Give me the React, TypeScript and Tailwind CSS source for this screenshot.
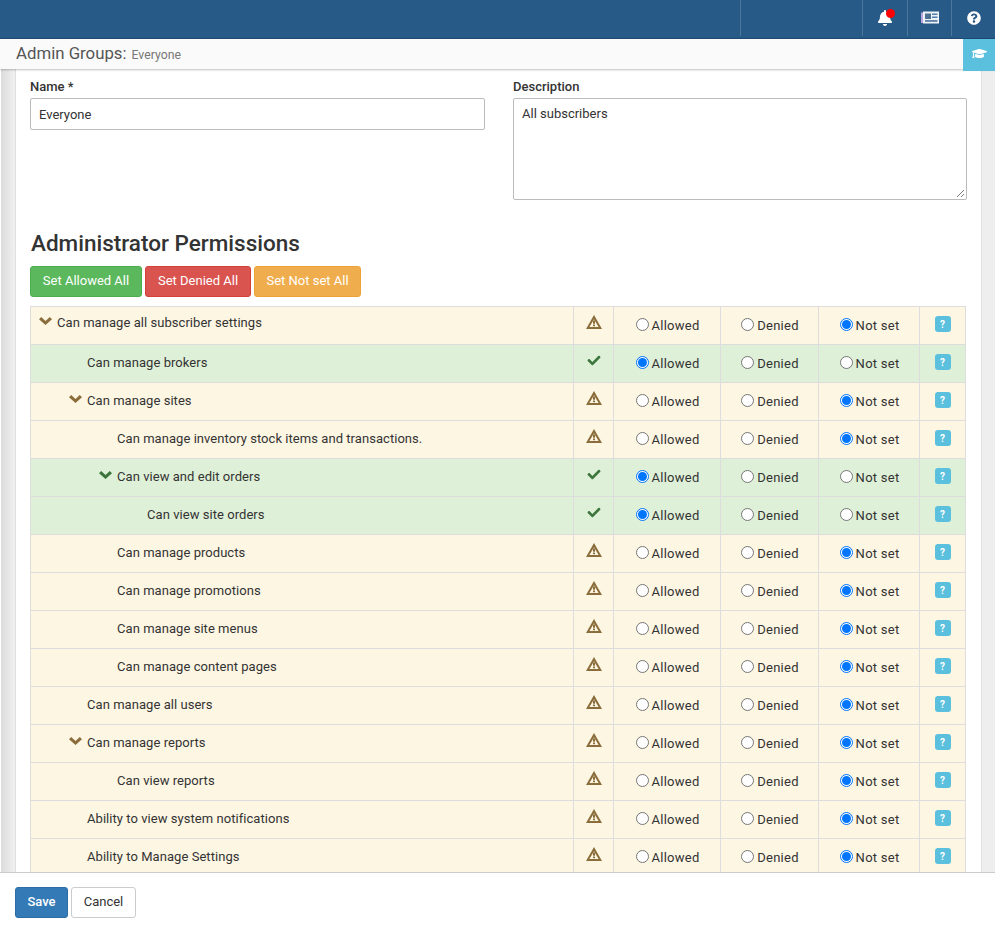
import { FaBell, FaCheck, FaGraduationCap, FaQuestionCircle } from "react-icons/fa";

type Perm = {
  label: string;
  level: number;
  open?: boolean;
  allowed?: boolean;
};

const perms: Perm[] = [
  { label: "Can manage all subscriber settings", level: 0, open: true },
  { label: "Can manage brokers", level: 1, allowed: true },
  { label: "Can manage sites", level: 1, open: true },
  { label: "Can manage inventory stock items and transactions.", level: 2 },
  { label: "Can view and edit orders", level: 2, open: true, allowed: true },
  { label: "Can view site orders", level: 3, allowed: true },
  { label: "Can manage products", level: 2 },
  { label: "Can manage promotions", level: 2 },
  { label: "Can manage site menus", level: 2 },
  { label: "Can manage content pages", level: 2 },
  { label: "Can manage all users", level: 1 },
  { label: "Can manage reports", level: 1, open: true },
  { label: "Can view reports", level: 2 },
  { label: "Ability to view system notifications", level: 1 },
  { label: "Ability to Manage Settings", level: 1 },
];

const indents = ["pl-[26px]", "pl-[56px]", "pl-[86px]", "pl-[116px]"];

function WarnIcon() {
  return (
    <svg viewBox="0 0 16 14" className="mb-[2px] h-[14px] w-[16px] text-[#8a6d3b]" fill="currentColor">
      <path
        fillRule="evenodd"
        d="M8 0 16 14H0ZM8 4.2 3.4 12H12.6ZM7 5.6H9V8.8H7ZM7 9.6H9V11.2H7Z"
      />
    </svg>
  );
}

function Chevron({ green }: { green?: boolean }) {
  return (
    <svg
      viewBox="0 0 13 8"
      className={`mr-[5px] -ml-[18px] h-[8px] w-[13px] -translate-y-[2px] ${
        green ? "text-[#3c763d]" : "text-[#8a6d3b]"
      }`}
      fill="currentColor"
    >
      <path d="M0 2.2 2.2 0 6.5 4 10.8 0 13 2.2 6.5 8Z" />
    </svg>
  );
}

function NewsIcon() {
  return (
    <svg viewBox="0 0 18 13" className="h-[13px] w-[18px]">
      <rect x="0" y="1.5" width="2.5" height="10.5" fill="#b9a6e0" />
      <rect x="2" y="0.5" width="16" height="12" fill="#eef2f6" />
      <rect x="4" y="2.5" width="6" height="5.5" fill="#4d6f92" />
      <rect x="11" y="2.5" width="5.5" height="1.5" fill="#4d7fb0" />
      <rect x="11" y="5.5" width="5.5" height="1.5" fill="#4d7fb0" />
      <rect x="4" y="9.2" width="12.5" height="1.5" fill="#3e6a94" />
    </svg>
  );
}

function Radio({ checked, label }: { checked: boolean; label: string }) {
  return (
    <span className="inline-flex items-center pb-[2px]">
      <span
        className={
          checked
            ? "flex h-[13px] w-[13px] items-center justify-center rounded-full border border-[#0075ff] bg-white"
            : "h-[13px] w-[13px] rounded-full border border-[#767676] bg-white"
        }
      >
        {checked ? <span className="h-[9px] w-[9px] rounded-full bg-[#0075ff]" /> : null}
      </span>
      <span className="ml-[3px] translate-y-[1px] tracking-[0.25px]">{label}</span>
    </span>
  );
}

function PermRow({ p, first }: { p: Perm; first: boolean }) {
  const cell = "flex shrink-0 items-center justify-center border-l border-[#ddd]";
  return (
    <div className={`flex h-[38px] border-b border-[#ddd] ${p.allowed ? "bg-[#dff0d8]" : "bg-[#fdf6e3]"}`}>
      <div
        className={`flex w-[542px] shrink-0 items-center tracking-[0.05px] ${
          first ? "pb-[6px]" : "pb-[2px]"
        } ${indents[p.level]}`}
      >
        {p.open ? <Chevron green={p.allowed} /> : null}
        <span>{p.label}</span>
      </div>
      <div className={`${cell} w-[40px] pb-[6px]`}>
        {p.allowed ? <FaCheck className="h-[13px] w-[14px] text-[#3c763d]" /> : <WarnIcon />}
      </div>
      <div className={`${cell} w-[107px] pl-[1px]`}>
        <Radio checked={!!p.allowed} label="Allowed" />
      </div>
      <div className={`${cell} w-[98px] pl-[1px]`}>
        <Radio checked={false} label="Denied" />
      </div>
      <div className={`${cell} w-[101px] pl-[1px]`}>
        <Radio checked={!p.allowed} label="Not set" />
      </div>
      <div className={`${cell} w-[46px] pb-[3px]`}>
        <span className="flex h-[16px] w-[16px] items-center justify-center rounded-[3px] bg-[#5bc0de] text-[10px] font-bold text-white">
          ?
        </span>
      </div>
    </div>
  );
}

export default function App() {
  return (
    <div className="flex h-[929px] flex-col overflow-hidden bg-white font-['Roboto',sans-serif] text-[13px] text-[#333]">
      {/* top bar */}
      <header className="flex h-[39px] shrink-0 justify-end border-b border-[#1f4a73] bg-[#285a88]">
        <div className="mb-[2px] w-[122px] border-l border-[#4d769c]" />
        <div className="mb-[2px] flex w-[45px] items-center justify-center border-l border-[#4d769c] pb-[1px]">
          <span className="relative">
            <FaBell className="h-[16px] w-[16px] text-white" />
            <span className="absolute -top-[1px] left-[9px] h-[9px] w-[9px] rounded-full bg-[#f00]" />
          </span>
        </div>
        <div className="mb-[2px] flex w-[44px] items-center justify-center border-l border-[#4d769c] pb-[1px]">
          <NewsIcon />
        </div>
        <div className="mb-[2px] flex w-[44px] items-center justify-center border-l border-[#4d769c]">
          <FaQuestionCircle className="h-[14px] w-[14px] text-white" />
        </div>
      </header>

      {/* title bar */}
      <div className="z-10 flex h-[30px] shrink-0 items-start justify-between bg-[#fafafa] shadow-[0_1px_2px_rgba(0,0,0,0.25)]">
        <div className="flex items-baseline pl-[16px] pt-[2px]">
          <span className="text-[16.8px] text-[#555]">Admin Groups:</span>
          <span className="ml-[5px] text-[12.25px] text-[#777]">Everyone</span>
        </div>
        <div className="flex h-[32px] w-[32px] items-center justify-center bg-[#5bc0de] pb-[3px]">
          <FaGraduationCap className="h-[15px] w-[15px] text-white" />
        </div>
      </div>

      {/* main */}
      <div className="flex min-h-0 flex-1">
        <div className="w-[16px] shrink-0 border-l border-r border-l-white border-r-[#e0e0e0] bg-gradient-to-r from-[#dcdcdc] to-[#f0f0f0]" />
        <main className="min-w-0 flex-1 overflow-hidden px-[14px]">
          <div className="grid grid-cols-[455px_454px] gap-x-[28px] pt-[10px]">
            <div>
              <label className="block h-[19px] font-medium leading-[15px] text-[#333]">Name *</label>
              <div className="flex h-[32px] items-center rounded-[2px] border border-[#bbb] bg-white px-[8px] pt-[1px]">
                Everyone
              </div>
            </div>
            <div>
              <label className="block h-[19px] font-medium leading-[15px] text-[#333]">Description</label>
              <div className="relative h-[102px] rounded-[2px] border border-[#bbb] bg-white px-[8px] pt-[5px]">
                All subscribers
                <svg viewBox="0 0 10 10" className="absolute right-[1px] bottom-[1px] h-[10px] w-[10px] text-[#777]">
                  <path d="M9 2 2 9M9 6 6 9" stroke="currentColor" fill="none" />
                </svg>
              </div>
            </div>
          </div>

          <h2 className="mt-[28px] pl-[1px] text-[22.5px] font-medium leading-[30px] text-[#333]">
            Administrator Permissions
          </h2>
          <div className="mt-[8px] flex gap-[3px]">
            <button className="h-[31px] w-[112px] rounded-[3px] border border-[#4cae4c] bg-[#5cb85c] pb-[1px] text-white">
              Set Allowed All
            </button>
            <button className="h-[31px] w-[106px] rounded-[3px] border border-[#d43f3a] bg-[#d9534f] pb-[1px] text-white">
              Set Denied All
            </button>
            <button className="h-[31px] w-[107px] rounded-[3px] border border-[#eea236] bg-[#f0ad4e] pb-[1px] text-white">
              Set Not set All
            </button>
          </div>

          <div className="mt-[9px] w-[936px] border-x border-t border-[#ddd]">
            {perms.map((p, i) => (
              <PermRow key={p.label} p={p} first={i === 0} />
            ))}
          </div>
        </main>
        <div className="w-[14px] shrink-0 border-l border-[#e0e0e0] bg-[#eee]" />
      </div>

      {/* footer */}
      <footer className="z-10 flex h-[57px] shrink-0 items-start gap-[3px] border-t border-[#ccc] bg-white pl-[15px] pt-[14px]">
        <button className="h-[31px] w-[53px] rounded-[3px] border border-[#2e6da4] bg-[#337ab7] pb-[1px] font-medium text-white">
          Save
        </button>
        <button className="h-[31px] w-[65px] rounded-[3px] border border-[#ccc] bg-white pb-[1px] text-[#333]">
          Cancel
        </button>
      </footer>
    </div>
  );
}
